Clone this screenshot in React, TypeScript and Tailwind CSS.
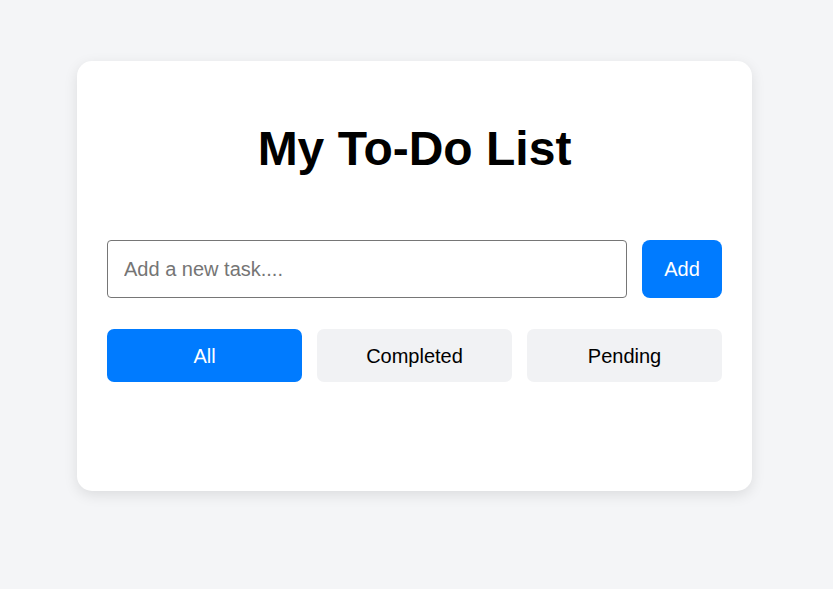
import React, { useState } from "react";

export default function App() {
  const [filter, setFilter] = useState("All");
  const [text, setText] = useState("");
  const filters = ["All", "Completed", "Pending"];
  return (
    <div className="min-h-screen w-full bg-[#f4f5f7] pt-[61px] pl-[77px] font-['Liberation_Sans',Arial,sans-serif]">
      <div className="w-[675px] h-[430px] bg-white rounded-[15px] shadow-[0_4px_14px_rgba(0,0,0,0.1)] px-[30px] pt-[60px]">
        <h1 className="text-[48px] leading-[55px] font-bold text-center text-black">My To-Do List</h1>
        <div className="mt-[64px] flex gap-[15px]">
          <input
            value={text}
            onChange={(e) => setText(e.target.value)}
            placeholder="Add a new task...."
            className="flex-1 h-[58px] border border-[#767676] rounded-[4px] px-[16px] text-[20px] text-black placeholder:text-[#757575] outline-none"
          />
          <button className="w-[80px] h-[58px] bg-[#007bff] rounded-[8px] text-white text-[20px]">Add</button>
        </div>
        <div className="mt-[31px] grid grid-cols-3 gap-[15px]">
          {filters.map((f) => (
            <button
              key={f}
              onClick={() => setFilter(f)}
              className={
                f === filter
                  ? "h-[53px] rounded-[7px] text-[20px] bg-[#007bff] text-white"
                  : "h-[53px] rounded-[7px] text-[20px] bg-[#f1f2f4] text-black"
              }
            >
              {f}
            </button>
          ))}
        </div>
      </div>
    </div>
  );
}
